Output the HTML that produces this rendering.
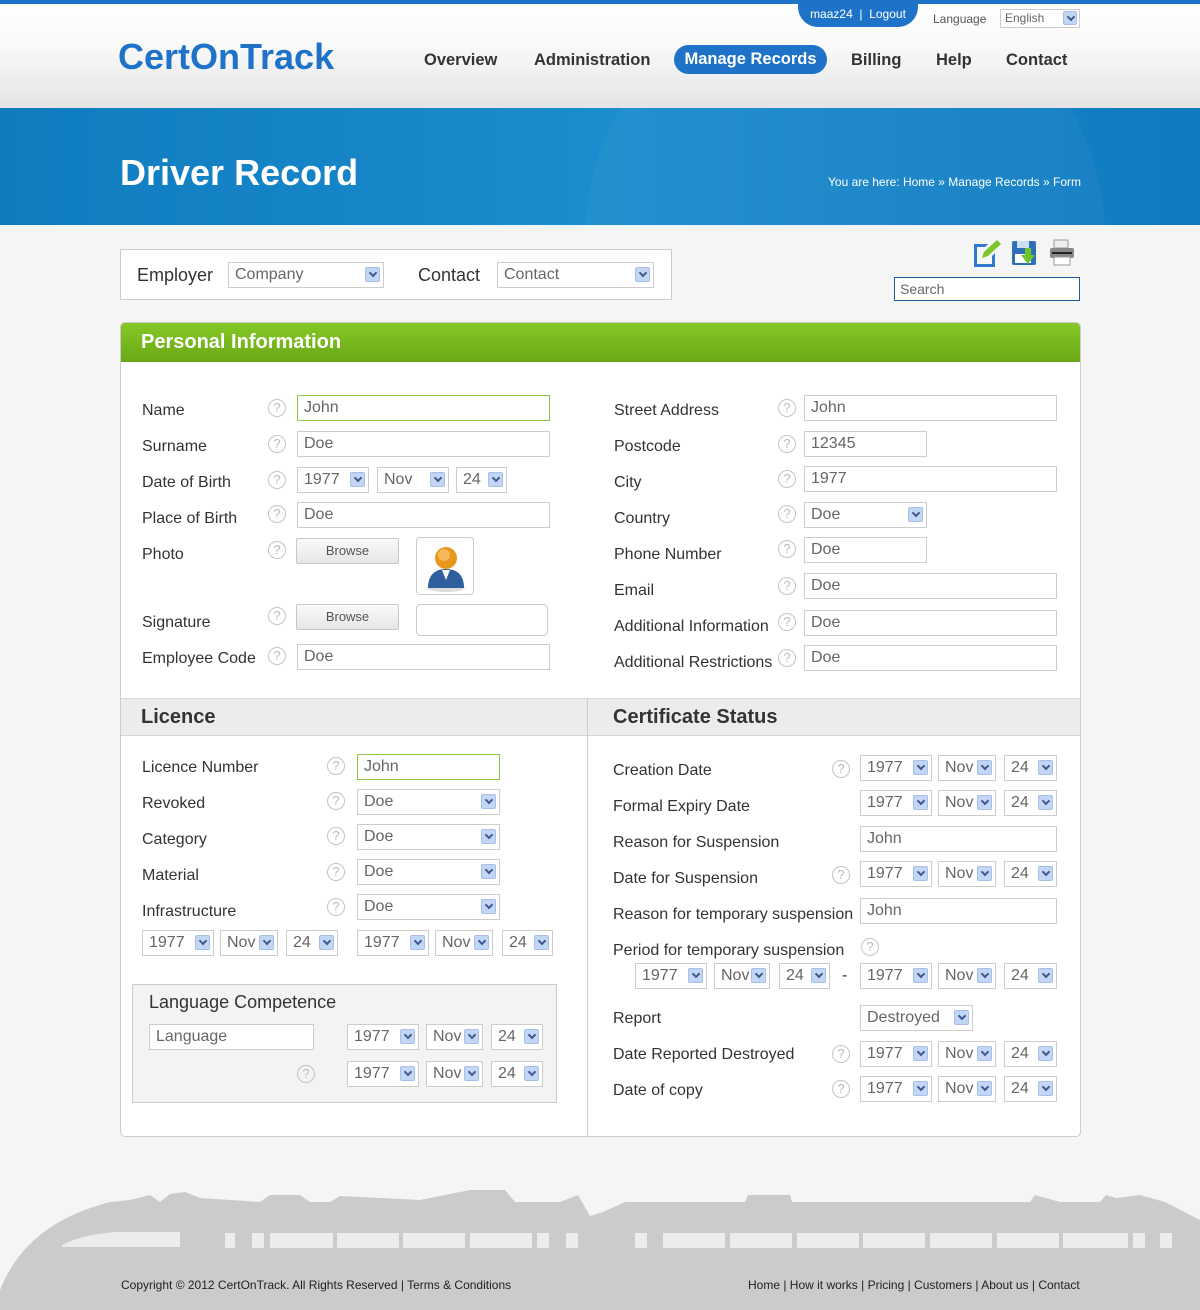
<!DOCTYPE html>
<html><head><meta charset="utf-8"><style>
*{margin:0;padding:0;box-sizing:border-box}
body{width:1200px;height:1310px;position:relative;background:#f5f5f5;font-family:"Liberation Sans",Arial,sans-serif;overflow:hidden}
div,span{position:absolute}
.l{font-size:16px;color:#333;white-space:nowrap}
.i{height:26px;border:1px solid #ccc;background:#fff;font-size:16px;color:#666;padding-left:6px;line-height:24px;white-space:nowrap}
.a{position:absolute;right:3px;top:4px;width:15px;height:15px;background:#c4d6f6;border:1px solid #a8bfe8;border-radius:2px}
.a:after{content:"";position:absolute;left:4px;top:2px;width:4px;height:4px;border-right:2px solid #3c5a8c;border-bottom:2px solid #3c5a8c;transform:rotate(45deg)}
.q{width:18px;height:18px;border:1.5px solid #c4c4c4;border-radius:50%;color:#bbb;font-size:13px;text-align:center;line-height:15px}
.b{border:1px solid #c8c8c8;border-radius:2px;background:linear-gradient(#fafafa,#e6e6e6);font-size:13px;color:#555;text-align:center;line-height:24px;height:26px}
.n{font-size:16.5px;font-weight:bold;color:#333;top:51px}
.h2{font-size:20px;font-weight:bold;color:#333}
</style></head><body>
<div style="left:0;top:0;width:1200px;height:108px;background:linear-gradient(#fff,#fafafa 40%,#e4e4e4);box-shadow:0 2px 4px rgba(0,0,0,.25)"></div>
<div style="left:0;top:0;width:1200px;height:4px;background:#1e73c8"></div>
<div style="left:798px;top:0;width:120px;height:27px;background:#1e73c8;border-radius:0 0 20px 20px;color:#fff;font-size:12px;text-align:center;line-height:28px">maaz24 &nbsp;|&nbsp; Logout</div>
<div style="left:933px;top:12px;font-size:12px;color:#555">Language</div>
<div class="i" style="left:1000px;top:9px;width:80px;height:19px;font-size:12px;line-height:17px;padding-left:4px">English<span class="a" style="top:1px;right:2px;width:14px;height:14px"></span></div>
<div style="left:118px;top:36px;font-size:36px;font-weight:bold;color:#1e73c8">CertOnTrack</div>
<div class="n" style="left:424px">Overview</div>
<div class="n" style="left:534px">Administration</div>
<div style="left:674px;top:45px;width:153px;height:29px;background:#1e73c8;border-radius:15px;color:#fff;font-size:16.5px;font-weight:bold;text-align:center;line-height:29px">Manage Records</div>
<div class="n" style="left:851px">Billing</div>
<div class="n" style="left:936px">Help</div>
<div class="n" style="left:1006px">Contact</div>
<div style="left:0;top:108px;width:1200px;height:117px;background:linear-gradient(90deg,#0f7cc0,#1b8ccd 50%,#0f7ac0);overflow:hidden">
<div style="left:585px;top:-130px;width:520px;height:520px;border-radius:50%;background:rgba(255,255,255,.04)"></div></div>
<div style="left:120px;top:152px;font-size:36px;font-weight:bold;color:#fff">Driver Record</div>
<div style="left:828px;top:175px;font-size:12px;color:#fff">You are here: Home » Manage Records » Form</div>
<div style="left:120px;top:249px;width:552px;height:51px;background:#fff;border:1px solid #ccc"></div>
<div class="l" style="left:137px;top:265px;font-size:18px">Employer</div>
<div class="i" style="left:228px;top:262px;width:156px">Company<span class="a"></span></div>
<div class="l" style="left:418px;top:265px;font-size:18px">Contact</div>
<div class="i" style="left:497px;top:262px;width:157px">Contact<span class="a"></span></div>
<svg style="position:absolute;left:970px;top:238px" width="110" height="30">
<path d="M4 6h14l-3 3H7v17h15v-8l3-3v14H4z" fill="#2d7ad0"/><path d="M12 20l2-6 13-12 4 4-13 12z" fill="#7cc42a"/>
<rect x="42" y="3" width="24" height="24" rx="2" fill="#2d6fb8"/><rect x="47" y="3" width="12" height="7" fill="#cfe0f5"/><rect x="45" y="16" width="16" height="9" fill="#fff"/><path d="M55 10h6v7h4l-7 9-7-9h4z" fill="#6cc428"/>
<rect x="84" y="2" width="14" height="8" fill="#eee" stroke="#999"/><rect x="80" y="10" width="24" height="10" rx="2" fill="#888"/><rect x="82" y="14" width="20" height="2" fill="#222"/><rect x="84" y="19" width="16" height="8" fill="#fff" stroke="#999"/>
</svg>
<div class="i" style="left:894px;top:277px;width:186px;height:24px;border:1px solid #1e5a96;font-size:14px;line-height:22px;padding-left:5px">Search</div>
<div style="left:120px;top:322px;width:961px;height:815px;background:#fff;border:1px solid #ccc;border-radius:5px;overflow:hidden">
<div style="left:0;top:0;width:961px;height:39px;background:linear-gradient(#86c826,#6aa816)"></div>
<div style="left:0;top:375px;width:961px;height:38px;background:#ececec;border-top:1px solid #d6d6d6;border-bottom:1px solid #d6d6d6"></div>
<div style="left:466px;top:375px;width:1px;height:440px;background:#ccc"></div>
</div>
<div style="left:141px;top:331px;font-size:20px;font-weight:bold;color:#fff">Personal Information</div>
<div class="l" style="left:142px;top:402px">Name</div>
<div class="l" style="left:142px;top:438px">Surname</div>
<div class="l" style="left:142px;top:474px">Date of Birth</div>
<div class="l" style="left:142px;top:510px">Place of Birth</div>
<div class="l" style="left:142px;top:546px">Photo</div>
<div class="l" style="left:142px;top:614px">Signature</div>
<div class="l" style="left:142px;top:650px">Employee Code</div>
<div class="q" style="left:268px;top:399px">?</div>
<div class="q" style="left:268px;top:435px">?</div>
<div class="q" style="left:268px;top:471px">?</div>
<div class="q" style="left:268px;top:505px">?</div>
<div class="q" style="left:268px;top:541px">?</div>
<div class="q" style="left:268px;top:607px">?</div>
<div class="q" style="left:268px;top:647px">?</div>
<div class="i" style="left:297px;top:395px;width:253px;border-color:#8cc63f">John</div>
<div class="i" style="left:297px;top:431px;width:253px">Doe</div>
<div class="i" style="left:297px;top:467px;width:72px">1977<span class="a"></span></div>
<div class="i" style="left:377px;top:467px;width:72px">Nov<span class="a"></span></div>
<div class="i" style="left:456px;top:467px;width:51px">24<span class="a"></span></div>
<div class="i" style="left:297px;top:502px;width:253px">Doe</div>
<div class="b" style="left:296px;top:538px;width:103px">Browse</div>
<div style="left:416px;top:537px;width:58px;height:58px;border:1px solid #ccc;border-radius:4px;background:#fff">
<svg width="56" height="56"><ellipse cx="29" cy="50" rx="19" ry="4" fill="#ddd"/><path d="M11 50c0-12 6-19 18-19s18 7 18 19z" fill="#2f5f9f"/><path d="M25 32l4 10 4-10z" fill="#fff"/><circle cx="29" cy="20" r="11" fill="#e8961c"/><circle cx="27" cy="17" r="6" fill="#f5b957"/></svg></div>
<div class="b" style="left:296px;top:604px;width:103px">Browse</div>
<div style="left:416px;top:604px;width:132px;height:32px;border:1px solid #ccc;border-radius:4px;background:#fff"></div>
<div class="i" style="left:297px;top:644px;width:253px">Doe</div>
<div class="l" style="left:614px;top:402px">Street Address</div>
<div class="l" style="left:614px;top:438px">Postcode</div>
<div class="l" style="left:614px;top:474px">City</div>
<div class="l" style="left:614px;top:510px">Country</div>
<div class="l" style="left:614px;top:546px">Phone Number</div>
<div class="l" style="left:614px;top:582px">Email</div>
<div class="l" style="left:614px;top:618px">Additional Information</div>
<div class="l" style="left:614px;top:654px">Additional Restrictions</div>
<div class="q" style="left:778px;top:399px">?</div>
<div class="q" style="left:778px;top:435px">?</div>
<div class="q" style="left:778px;top:470px">?</div>
<div class="q" style="left:778px;top:505px">?</div>
<div class="q" style="left:778px;top:540px">?</div>
<div class="q" style="left:778px;top:577px">?</div>
<div class="q" style="left:778px;top:613px">?</div>
<div class="q" style="left:778px;top:649px">?</div>
<div class="i" style="left:804px;top:395px;width:253px">John</div>
<div class="i" style="left:804px;top:431px;width:123px">12345</div>
<div class="i" style="left:804px;top:466px;width:253px">1977</div>
<div class="i" style="left:804px;top:502px;width:123px">Doe<span class="a"></span></div>
<div class="i" style="left:804px;top:537px;width:123px">Doe</div>
<div class="i" style="left:804px;top:573px;width:253px">Doe</div>
<div class="i" style="left:804px;top:610px;width:253px">Doe</div>
<div class="i" style="left:804px;top:645px;width:253px">Doe</div>
<div class="h2" style="left:141px;top:706px">Licence</div>
<div class="h2" style="left:613px;top:706px">Certificate Status</div>
<div class="l" style="left:142px;top:759px">Licence Number</div>
<div class="l" style="left:142px;top:795px">Revoked</div>
<div class="l" style="left:142px;top:831px">Category</div>
<div class="l" style="left:142px;top:867px">Material</div>
<div class="l" style="left:142px;top:903px">Infrastructure</div>
<div class="q" style="left:327px;top:757px">?</div>
<div class="q" style="left:327px;top:792px">?</div>
<div class="q" style="left:327px;top:827px">?</div>
<div class="q" style="left:327px;top:863px">?</div>
<div class="q" style="left:327px;top:898px">?</div>
<div class="i" style="left:357px;top:754px;width:143px;border-color:#8cc63f">John</div>
<div class="i" style="left:357px;top:789px;width:143px">Doe<span class="a"></span></div>
<div class="i" style="left:357px;top:824px;width:143px">Doe<span class="a"></span></div>
<div class="i" style="left:357px;top:859px;width:143px">Doe<span class="a"></span></div>
<div class="i" style="left:357px;top:894px;width:143px">Doe<span class="a"></span></div>
<div class="i" style="left:142px;top:930px;width:72px">1977<span class="a"></span></div>
<div class="i" style="left:220px;top:930px;width:58px">Nov<span class="a"></span></div>
<div class="i" style="left:286px;top:930px;width:52px">24<span class="a"></span></div>
<div class="i" style="left:357px;top:930px;width:72px">1977<span class="a"></span></div>
<div class="i" style="left:435px;top:930px;width:58px">Nov<span class="a"></span></div>
<div class="i" style="left:502px;top:930px;width:51px">24<span class="a"></span></div>
<div style="left:132px;top:984px;width:425px;height:119px;background:#f3f3f3;border:1px solid #ccc"></div>
<div class="l" style="left:149px;top:992px;font-size:18px">Language Competence</div>
<div class="i" style="left:149px;top:1024px;width:165px">Language</div>
<div class="i" style="left:347px;top:1024px;width:72px">1977<span class="a"></span></div>
<div class="i" style="left:426px;top:1024px;width:57px">Nov<span class="a"></span></div>
<div class="i" style="left:491px;top:1024px;width:52px">24<span class="a"></span></div>
<div class="q" style="left:297px;top:1065px">?</div>
<div class="i" style="left:347px;top:1061px;width:72px">1977<span class="a"></span></div>
<div class="i" style="left:426px;top:1061px;width:57px">Nov<span class="a"></span></div>
<div class="i" style="left:491px;top:1061px;width:52px">24<span class="a"></span></div>
<div class="l" style="left:613px;top:762px">Creation Date</div>
<div class="l" style="left:613px;top:798px">Formal Expiry Date</div>
<div class="l" style="left:613px;top:834px">Reason for Suspension</div>
<div class="l" style="left:613px;top:870px">Date for Suspension</div>
<div class="l" style="left:613px;top:906px">Reason for temporary suspension</div>
<div class="l" style="left:613px;top:942px">Period for temporary suspension</div>
<div class="l" style="left:613px;top:1010px">Report</div>
<div class="l" style="left:613px;top:1046px">Date Reported Destroyed</div>
<div class="l" style="left:613px;top:1082px">Date of copy</div>
<div class="q" style="left:832px;top:760px">?</div>
<div class="q" style="left:832px;top:866px">?</div>
<div class="q" style="left:861px;top:938px">?</div>
<div class="q" style="left:832px;top:1045px">?</div>
<div class="q" style="left:832px;top:1080px">?</div>
<div class="i" style="left:860px;top:755px;width:72px">1977<span class="a"></span></div>
<div class="i" style="left:938px;top:755px;width:58px">Nov<span class="a"></span></div>
<div class="i" style="left:1004px;top:755px;width:53px">24<span class="a"></span></div>
<div class="i" style="left:860px;top:790px;width:72px">1977<span class="a"></span></div>
<div class="i" style="left:938px;top:790px;width:58px">Nov<span class="a"></span></div>
<div class="i" style="left:1004px;top:790px;width:53px">24<span class="a"></span></div>
<div class="i" style="left:860px;top:826px;width:197px">John</div>
<div class="i" style="left:860px;top:861px;width:72px">1977<span class="a"></span></div>
<div class="i" style="left:938px;top:861px;width:58px">Nov<span class="a"></span></div>
<div class="i" style="left:1004px;top:861px;width:53px">24<span class="a"></span></div>
<div class="i" style="left:860px;top:898px;width:197px">John</div>
<div class="i" style="left:635px;top:963px;width:72px">1977<span class="a"></span></div>
<div class="i" style="left:714px;top:963px;width:56px">Nov<span class="a"></span></div>
<div class="i" style="left:779px;top:963px;width:51px">24<span class="a"></span></div>
<div class="l" style="left:842px;top:967px">-</div>
<div class="i" style="left:860px;top:963px;width:72px">1977<span class="a"></span></div>
<div class="i" style="left:938px;top:963px;width:58px">Nov<span class="a"></span></div>
<div class="i" style="left:1004px;top:963px;width:53px">24<span class="a"></span></div>
<div class="i" style="left:860px;top:1005px;width:113px">Destroyed<span class="a"></span></div>
<div class="i" style="left:860px;top:1041px;width:72px">1977<span class="a"></span></div>
<div class="i" style="left:938px;top:1041px;width:58px">Nov<span class="a"></span></div>
<div class="i" style="left:1004px;top:1041px;width:53px">24<span class="a"></span></div>
<div class="i" style="left:860px;top:1076px;width:72px">1977<span class="a"></span></div>
<div class="i" style="left:938px;top:1076px;width:58px">Nov<span class="a"></span></div>
<div class="i" style="left:1004px;top:1076px;width:53px">24<span class="a"></span></div>
<svg style="position:absolute;left:0;top:1190px" width="1200" height="120">
<path d="M0 100 C20 50 60 25 110 12 L130 10 L150 5 L160 12 L170 4 L185 2 L200 8 L260 12 L270 5 L300 5 L310 12 L330 12 L340 6 L420 10 L470 0 L505 0 L515 12 L560 12 L578 5 L590 26 L603 22 L625 12 L745 12 L748 5 L790 5 L792 12 L1030 12 L1035 5 L1060 12 L1100 12 L1106 5 L1116 8 L1140 5 L1165 12 L1200 30 L1200 120 L0 120 Z" fill="#cbcbcb"/>
<g fill="#ececec"><path d="M62 55 C80 45 110 42 120 42 L180 42 L180 57 L62 57Z"/>
<rect x="225" y="43" width="10" height="15"/><rect x="252" y="43" width="12" height="15"/><rect x="270" y="43" width="63" height="15"/><rect x="337" y="43" width="62" height="15"/><rect x="403" y="43" width="62" height="15"/><rect x="470" y="43" width="62" height="15"/><rect x="537" y="43" width="12" height="15"/><rect x="566" y="43" width="12" height="15"/>
<rect x="635" y="43" width="12" height="15"/><rect x="663" y="43" width="62" height="15"/><rect x="730" y="43" width="62" height="15"/><rect x="797" y="43" width="62" height="15"/><rect x="863" y="43" width="62" height="15"/><rect x="930" y="43" width="62" height="15"/><rect x="997" y="43" width="62" height="15"/><rect x="1063" y="43" width="65" height="15"/><rect x="1133" y="43" width="12" height="15"/><rect x="1160" y="43" width="12" height="15"/></g>
</svg>
<div style="left:121px;top:1278px;font-size:12px;color:#222">Copyright © 2012 CertOnTrack. All Rights Reserved | Terms &amp; Conditions</div>
<div style="left:748px;top:1278px;font-size:12px;color:#222">Home | How it works | Pricing | Customers | About us | Contact</div>
</body></html>
